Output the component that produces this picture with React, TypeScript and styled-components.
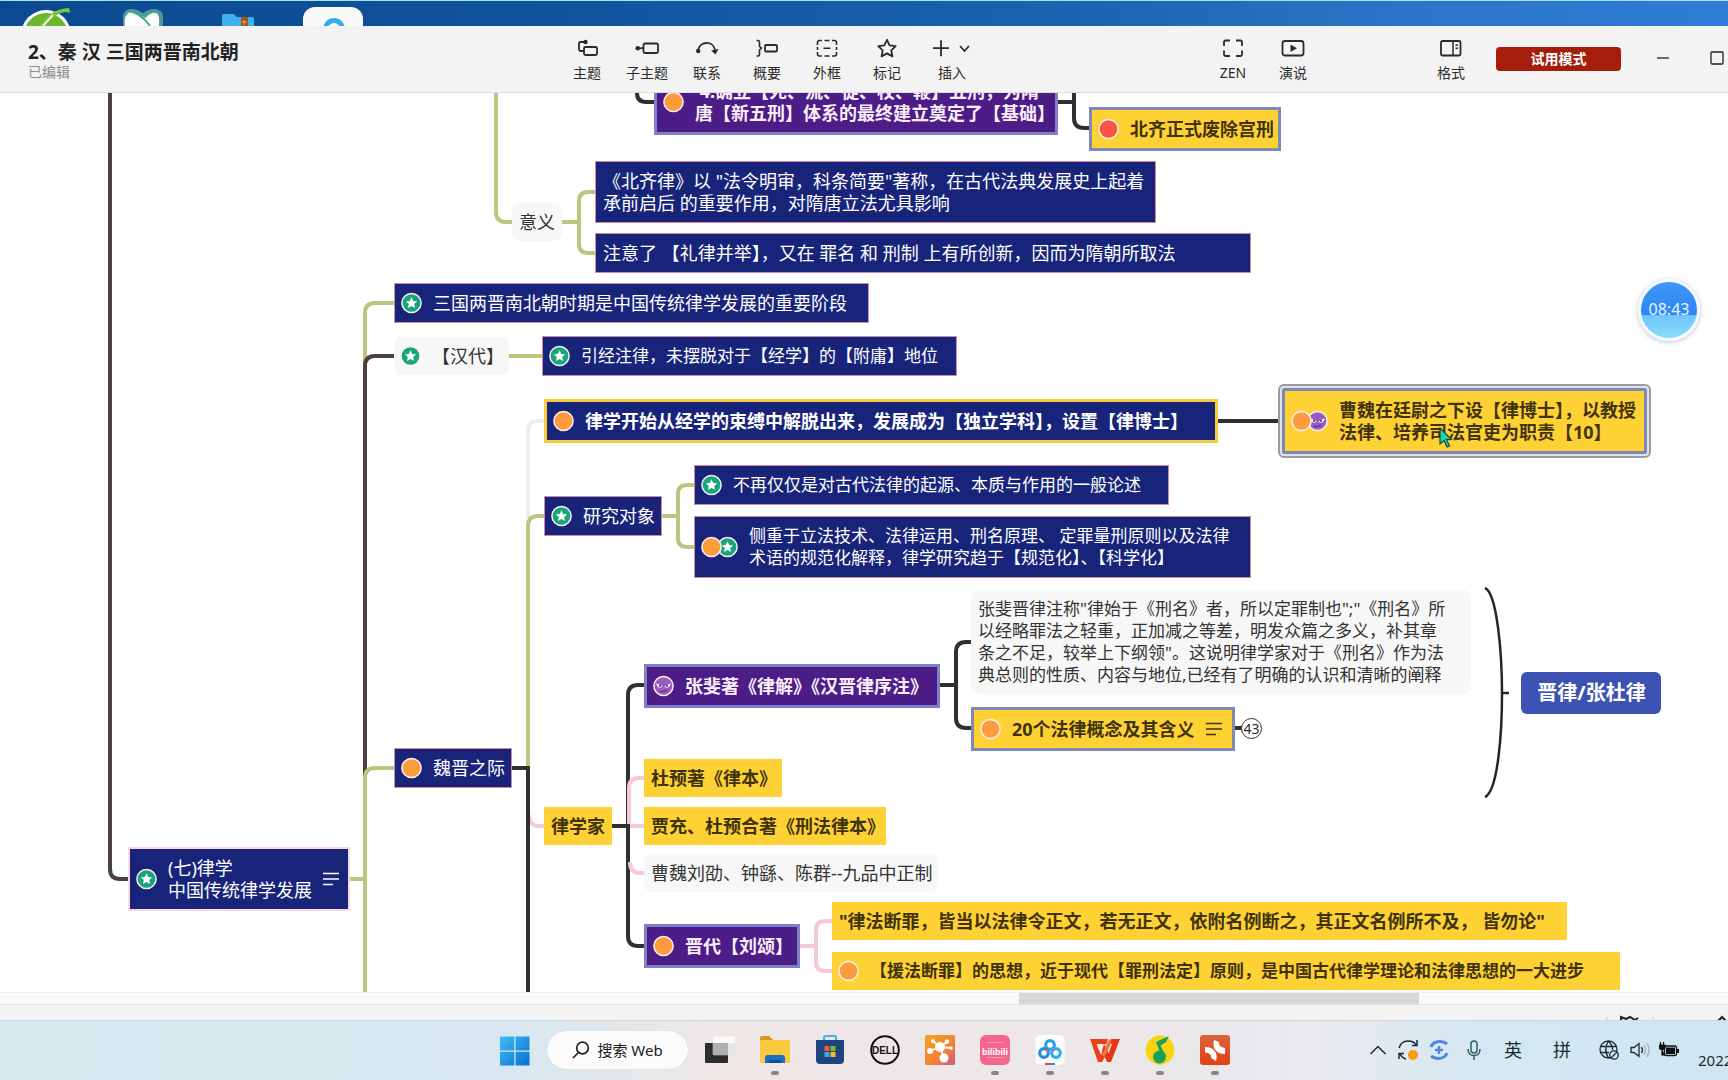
import React from "react";
import styled, { createGlobalStyle } from "styled-components";

const GlobalStyle = createGlobalStyle`
  * { box-sizing: border-box; }
  body {
    margin: 0;
    overflow: hidden;
    background: #fff;
    color: #2b2b2b;
    font-family: "Noto Sans", "Noto Sans CJK SC", sans-serif;
  }
  button {
    margin: 0;
    padding: 0;
    border: 0;
    background: none;
    color: inherit;
    font: inherit;
  }
  svg { display: block; }
`;

const Page = styled.div`
  display: flex;
  flex-direction: column;
  height: 100vh;
  overflow: hidden;
`;

/* ---------- desktop strip ---------- */

const Desktop = styled.div`
  flex: none;
  display: flex;
  height: 26px;
  overflow: hidden;
  border-top: 1px solid #a9e3ee;
  background: linear-gradient(90deg, #0b4a90 0%, #0f539c 30%, #1b63b0 62%, #2c76ca 82%, #2e7cd6 100%);
`;

const DesktopIcon = styled.div`
  flex: none;
  width: 95px;
  display: flex;
  justify-content: center;
`;

/* ---------- window header ---------- */

const Header = styled.header`
  flex: none;
  display: flex;
  height: 67px;
  background: #f3f3f3;
  border-bottom: 1px solid #dedede;
`;

const TitleBlock = styled.div`
  flex: 557 1 0;
  min-width: 0;
  white-space: nowrap;
`;

const Title = styled.h1`
  margin: 15px 0 0 28px;
  font-size: 19px;
  line-height: 22px;
  font-weight: 700;
  color: #222;
`;

const Status = styled.p`
  margin: 0 0 0 28px;
  font-size: 14px;
  line-height: 18px;
  color: #8b8b8b;
`;

const Tools = styled.div`
  flex: none;
  display: flex;
`;

const Spacer = styled.div<{ $grow: number }>`
  flex: ${(p) => p.$grow} 1 0;
`;

const Tool = styled.button<{ $wide?: boolean }>`
  width: ${(p) => (p.$wide ? 70 : 60)}px;
  height: 66px;
  padding-top: 12px;
  display: flex;
  flex-direction: column;
  align-items: center;
  gap: 5px;
  font-size: 14px;
  line-height: 20px;
  white-space: nowrap;
`;

const TrialButton = styled.button`
  flex: none;
  align-self: flex-start;
  width: 125px;
  height: 24px;
  margin: 21px 15px 0;
  border-radius: 4px;
  background: #a41e0b;
  color: #fff;
  font-size: 14px;
  line-height: 24px;
  font-weight: 700;
`;

const WindowControls = styled.div`
  flex: none;
  display: flex;
  width: 92px;
  height: 64px;
  overflow: hidden;
`;

const WindowButton = styled.button`
  flex: none;
  width: 54px;
  display: flex;
  align-items: center;
  justify-content: center;
`;

/* ---------- map canvas ---------- */

const Canvas = styled.main`
  flex: 1;
  position: relative;
  min-height: 0;
  overflow: hidden;
  background: #fff;
`;

const Links = styled.svg`
  position: absolute;
  inset: 0;
  width: 100%;
  height: 100%;
  overflow: visible;
`;

type Kind = "navy" | "root" | "navyGold" | "purple" | "gold" | "goldFramed" | "plain" | "summary";

const kinds: Record<Kind, string> = {
  navy: "background:#18247a;color:#fff;border:1px solid #cf8ba6;",
  root: "background:#18247a;color:#fff;border:2px solid #fadadf;",
  navyGold: "background:#18247a;color:#fff;border:3px solid #f6cb3c;font-weight:700;",
  purple: "background:#4c1d86;color:#fbeefb;border:3px solid #7f81c6;font-weight:700;",
  gold: "background:#fed235;color:#41320c;font-weight:700;",
  goldFramed: "background:#fed235;color:#41320c;border:3px solid #8089b4;font-weight:700;",
  plain: "background:#f7f7f7;color:#333;border-radius:8px;",
  summary: "background:#3d53b3;color:#fff;border-radius:6px;font-weight:700;",
};

const NodeBox = styled.div<{
  $x: number;
  $y: number;
  $w: number;
  $kind: Kind;
  $marked?: boolean;
  $dense?: boolean;
  $selected?: boolean;
}>`
  position: absolute;
  left: ${(p) => p.$x}px;
  top: ${(p) => p.$y}px;
  width: ${(p) => p.$w}px;
  display: flex;
  align-items: center;
  gap: 11px;
  padding: 8px 6px 8px ${(p) => (p.$marked ? 6 : 7)}px;
  font-size: ${(p) => (p.$kind === "summary" ? 20 : p.$dense ? 17 : 18)}px;
  line-height: ${(p) => (p.$kind === "summary" ? 26 : 22)}px;
  white-space: pre;
  ${(p) => kinds[p.$kind]}
  ${(p) => p.$kind === "summary" && "justify-content: center;"}
  ${(p) => p.$selected && "outline: 2px solid #9b9b9b; outline-offset: 2px; border-radius: 2px; box-shadow: 0 0 0 2px #dfe3f1;"}
`;

const Markers = styled.span`
  flex: none;
  display: flex;
  svg + svg { margin-left: -5px; }
  svg:first-child { position: relative; z-index: 1; }
`;

const NoteIcon = styled.svg`
  flex: none;
  margin-left: auto;
  margin-right: 5px;
`;

const FoldCount = styled.button`
  position: absolute;
  left: 1241px;
  top: 625px;
  width: 21px;
  height: 21px;
  border: 1px solid #333;
  border-radius: 50%;
  background: #fff;
  font-size: 14px;
  line-height: 19px;
  text-align: center;
`;

const Timer = styled.div`
  position: absolute;
  right: 28px;
  top: 186px;
  width: 62px;
  height: 62px;
  border: 3px solid #f4faff;
  border-radius: 50%;
  background: linear-gradient(180deg, #3f97f8 0%, #2f86f5 58%, #6fc6f9 60%, #8bdcfb 100%);
  box-shadow: 0 1px 5px rgba(60, 80, 120, 0.35);
  color: #e6f5ff;
  font-size: 16px;
  line-height: 55px;
  text-align: center;
`;

const Pointer = styled.svg`
  position: absolute;
  left: 1439px;
  top: 334px;
`;

/* ---------- scrollbar and status bar ---------- */

const ScrollTrack = styled.div`
  flex: none;
  display: flex;
  height: 13px;
  background: #fafafa;
  border-top: 1px solid #ececec;
  border-bottom: 1px solid #e2e2e2;
`;

const ScrollThumb = styled.div`
  width: 400px;
  background: #d7d7d7;
`;

const StatusBar = styled.div`
  flex: none;
  display: flex;
  justify-content: flex-end;
  height: 15px;
  overflow: hidden;
  background: #f4f3f3;
`;

/* ---------- taskbar ---------- */

const Taskbar = styled.footer`
  flex: none;
  display: grid;
  grid-template-columns: 1fr auto 1fr;
  height: 60px;
  border-top: 1px solid #d3d6da;
  background: linear-gradient(90deg, #d6e9ef 0%, #d9e8f0 30%, #efe7e6 42%, #ece7e9 64%, #e9e9ee 76%, #d4e8f1 86%, #cfe6f1 100%);
`;

const Apps = styled.nav`
  grid-column: 2;
  display: flex;
  padding: 10px 0 0 2px;
`;

const Search = styled.button`
  width: 141px;
  height: 38px;
  margin: 0 17px;
  display: flex;
  align-items: center;
  justify-content: center;
  gap: 7px;
  border-radius: 19px;
  background: #fbfbfc;
  box-shadow: 0 0 1px #b9bcc2;
  font-size: 15px;
  line-height: 20px;
  color: #1b1b1b;
`;

const AppList = styled.div`
  display: flex;
  gap: 25px;
`;

const AppButton = styled.button<{ $running?: boolean }>`
  width: 30px;
  height: 44px;
  padding-top: 4px;
  display: flex;
  flex-direction: column;
  align-items: center;
  justify-content: space-between;
  &::after {
    content: "";
    width: 8px;
    height: 4px;
    border-radius: 2px;
    background: ${(p) => (p.$running ? "#8a8586" : "transparent")};
  }
`;

const Tray = styled.div`
  display: flex;
  justify-content: flex-end;
  overflow: hidden;
`;

const TrayButton = styled.button<{ $w: number }>`
  flex: none;
  width: ${(p) => p.$w}px;
  height: 58px;
  display: flex;
  align-items: center;
  justify-content: center;
  font-size: 18px;
  line-height: 24px;
  color: #1c2a33;
`;

const DateText = styled.div`
  flex: none;
  width: 30px;
  margin-left: 14px;
  padding-top: 28px;
  overflow: hidden;
  font-size: 15px;
  line-height: 22px;
  color: #1c2a33;
`;

/* ---------- drawings ---------- */

type MarkerName = "star" | "orange" | "red" | "imp";

const Marker = ({ name }: { name: MarkerName }) => {
  const fill = { star: "#17a57b", orange: "#fd9c3d", red: "#fb5243", imp: "#9a5bc0" }[name];
  return (
    <svg width="21" height="22" viewBox="0 0 21 22" aria-hidden="true">
      <circle cx="10.500" cy="11" r="9.600" fill={fill} stroke="#fdeef0" strokeWidth="1.500" />
      {name === "star" && (
        <path d="M10.500 5.300L12.200 9L16.200 9.400L13.200 12.100L14 16L10.500 14L7 16L7.800 12.100L4.800 9.400L8.800 9z" fill="#fff" />
      )}
      {name === "imp" && (
        <g>
          <path d="M3.200 8.200L9.500 11.300C8.500 13.600 4 13.200 3.200 8.200zM17.800 8.200L11.500 11.300C12.500 13.600 17 13.200 17.800 8.200z" fill="#fff" />
          <circle cx="7" cy="11" r="1" fill="#4a2468" />
          <circle cx="14" cy="11" r="1" fill="#4a2468" />
          <path d="M7 16Q10.500 17.500 14 15" stroke="#5f2f86" strokeWidth="1.300" fill="none" />
        </g>
      )}
    </svg>
  );
};

interface MapNode {
  x: number;
  y: number;
  w: number;
  kind: Kind;
  text: string;
  markers?: MarkerName[];
  note?: boolean;
  dense?: boolean;
  selected?: boolean;
}

const nodes: MapNode[] = [
  { x: 654, y: -24, w: 404, kind: "purple", markers: ["orange"], text: " 4.确立【死、流、徒、杖、鞭】五刑，为隋\n唐【新五刑】体系的最终建立奠定了【基础】" },
  { x: 1089, y: 14, w: 192, kind: "goldFramed", markers: ["red"], text: "北齐正式废除宫刑" },
  { x: 512, y: 110, w: 50, kind: "plain", text: "意义" },
  { x: 595, y: 68, w: 561, kind: "navy", text: "《北齐律》以 \"法令明审，科条简要\"著称，在古代法典发展史上起着\n承前启后 的重要作用，对隋唐立法尤具影响" },
  { x: 595, y: 140, w: 656, kind: "navy", text: "注意了 【礼律并举】，又在 罪名 和 刑制 上有所创新，因而为隋朝所取法" },
  { x: 394, y: 190, w: 475, kind: "navy", markers: ["star"], text: "三国两晋南北朝时期是中国传统律学发展的重要阶段" },
  { x: 394, y: 244, w: 115, kind: "plain", markers: ["star"], text: "【汉代】" },
  { x: 542, y: 243, w: 415, kind: "navy", dense: true, markers: ["star"], text: "引经注律，未摆脱对于【经学】的【附庸】地位" },
  { x: 544, y: 306, w: 674, kind: "navyGold", markers: ["orange"], text: "律学开始从经学的束缚中解脱出来，发展成为【独立学科】，设置【律博士】" },
  { x: 1282, y: 295, w: 365, kind: "goldFramed", selected: true, markers: ["orange", "imp"], text: "曹魏在廷尉之下设【律博士】，以教授\n法律、培养司法官吏为职责【10】" },
  { x: 544, y: 403, w: 118, kind: "navy", markers: ["star"], text: "研究对象" },
  { x: 694, y: 372, w: 475, kind: "navy", dense: true, markers: ["star"], text: "不再仅仅是对古代法律的起源、本质与作用的一般论述" },
  { x: 694, y: 423, w: 557, kind: "navy", dense: true, markers: ["orange", "star"], text: "侧重于立法技术、法律运用、刑名原理、 定罪量刑原则以及法律\n术语的规范化解释，律学研究趋于【规范化】、【科学化】" },
  { x: 971, y: 497, w: 500, kind: "plain", dense: true, text: "张斐晋律注称\"律始于《刑名》者，所以定罪制也\";\"《刑名》所\n以经略罪法之轻重，正加减之等差，明发众篇之多义，补其章\n条之不足，较举上下纲领\"。这说明律学家对于《刑名》作为法\n典总则的性质、内容与地位,已经有了明确的认识和清晰的阐释" },
  { x: 644, y: 571, w: 296, kind: "purple", markers: ["imp"], text: "张斐著《律解》《汉晋律序注》" },
  { x: 971, y: 614, w: 264, kind: "goldFramed", markers: ["orange"], note: true, text: "20个法律概念及其含义" },
  { x: 394, y: 655, w: 118, kind: "navy", markers: ["orange"], text: "魏晋之际" },
  { x: 544, y: 714, w: 68, kind: "gold", text: "律学家" },
  { x: 644, y: 666, w: 138, kind: "gold", text: "杜预著《律本》" },
  { x: 644, y: 714, w: 242, kind: "gold", text: "贾充、杜预合著《刑法律本》" },
  { x: 644, y: 761, w: 294, kind: "plain", text: "曹魏刘劭、钟繇、陈群--九品中正制" },
  { x: 644, y: 831, w: 156, kind: "purple", markers: ["orange"], text: "晋代【刘颂】" },
  { x: 832, y: 809, w: 735, kind: "gold", text: "\"律法断罪，皆当以法律令正文，若无正文，依附名例断之，其正文名例所不及， 皆勿论\"" },
  { x: 832, y: 859, w: 788, kind: "gold", dense: true, markers: ["orange"], text: "【援法断罪】的思想，近于现代【罪刑法定】原则，是中国古代律学理论和法律思想的一大进步" },
  { x: 128, y: 754, w: 222, kind: "root", markers: ["star"], note: true, text: "(七)律学\n中国传统律学发展" },
  { x: 1521, y: 579, w: 140, kind: "summary", text: "晋律/张杜律" },
];

const BROWN = "#4a403f";
const OLIVE = "#bfc47f";
const DARK = "#303030";
const PINK = "#f7c7dc";

const links: [string, string][] = [
  [BROWN, "M110 0V776Q110 786 120 786H128"],
  [OLIVE, "M496 0V119Q496 129 506 129H512"],
  [OLIVE, "M562 129H579M595 99H588Q579 99 579 108V151Q579 160 588 160H595"],
  [DARK, "M637 -5V0Q637 9 646 9H654"],
  [DARK, "M1058 9H1074M1074 -10V25Q1074 35 1084 35H1089"],
  [OLIVE, "M394 210H375Q365 210 365 220V270"],
  [BROWN, "M394 263H375Q365 263 365 273V690"],
  [OLIVE, "M509 263H542"],
  ["#eeeeee", "M544 328H538Q528 328 528 338V425"],
  [DARK, "M1218 328H1280"],
  [OLIVE, "M544 423H538Q528 423 528 433V675"],
  [OLIVE, "M662 423H678M694 392H687Q678 392 678 401V445Q678 454 687 454H694"],
  [OLIVE, "M394 675H375Q365 675 365 685V910M350 786H365"],
  [PINK, "M529 722Q529 733 539 733H544"],
  [DARK, "M512 675H528V910"],
  [DARK, "M612 733H628M644 592H638Q628 592 628 602V843Q628 853 638 853H644"],
  [PINK, "M644 685H639Q629 685 629 695V731M630 733H644M630 769Q630 780 640 780H644"],
  [DARK, "M940 592H956M971 549H966Q956 549 956 559V625Q956 635 966 635H971"],
  [DARK, "M1235 635H1242"],
  [PINK, "M800 853H816M832 828H825Q816 828 816 837V869Q816 878 825 878H832"],
];

const ToolIcon = ({ children, width = 24 }: { children: React.ReactNode; width?: number }) => (
  <svg width={width} height="20" viewBox={`0 0 ${width} 20`} fill="none" stroke="#2b2b2b" strokeWidth="1.800" strokeLinejoin="round" aria-hidden="true">
    {children}
  </svg>
);

const tools: { label: string; wide?: boolean; icon: React.ReactNode }[] = [
  {
    label: "主题",
    icon: (
      <ToolIcon>
        <rect x="9" y="9" width="13" height="8" rx="1.500" />
        <path d="M9 13H6Q4 13 4 11V5.500Q4 4 5.500 4H10" />
        <circle cx="10.500" cy="4" r="2.200" fill="#2b2b2b" stroke="none" />
      </ToolIcon>
    ),
  },
  {
    label: "子主题",
    icon: (
      <ToolIcon>
        <rect x="8.500" y="5.500" width="14.500" height="9.500" rx="1.500" />
        <path d="M2 10.200H8" />
        <circle cx="2.800" cy="10.200" r="2.300" fill="#2b2b2b" stroke="none" />
      </ToolIcon>
    ),
  },
  {
    label: "联系",
    icon: (
      <ToolIcon>
        <path d="M3 13C4 3 18 2 20 12" />
        <circle cx="3.200" cy="13" r="2.200" fill="#2b2b2b" stroke="none" />
        <path d="M16 12.500L23.500 11L20.500 16.500z" fill="#2b2b2b" stroke="none" />
      </ToolIcon>
    ),
  },
  {
    label: "概要",
    icon: (
      <ToolIcon>
        <path d="M1.500 2.500H3Q4.500 2.500 4.500 4V8.500L6.500 10.200L4.500 12V16.500Q4.500 18 3 18H1.500" strokeWidth="1.600" />
        <rect x="10" y="7" width="12" height="6.500" rx="1" />
      </ToolIcon>
    ),
  },
  {
    label: "外框",
    icon: (
      <ToolIcon>
        <path d="M7 2.500H4.500Q2.500 2.500 2.500 4.500V7M2.500 9V12M2.500 14V16Q2.500 18 4.500 18H7M9.500 18H14.500M17 18H19.500Q21.500 18 21.500 16V14M21.500 12V9M21.500 7V4.500Q21.500 2.500 19.500 2.500H17M14.500 2.500H9.500M8.500 10.200H15.500" strokeWidth="1.600" />
      </ToolIcon>
    ),
  },
  {
    label: "标记",
    icon: (
      <ToolIcon>
        <path d="M12 1.800L14.600 7.300L20.700 8.100L16.300 12.300L17.400 18.400L12 15.400L6.600 18.400L7.700 12.300L3.300 8.100L9.400 7.300z" />
      </ToolIcon>
    ),
  },
  {
    label: "插入",
    wide: true,
    icon: (
      <ToolIcon width={40}>
        <path d="M1 10.200H17M9 2.200V18.200M28 8L32.500 13L37 8" />
      </ToolIcon>
    ),
  },
];

const apps: { name: string; running?: boolean; icon: React.ReactNode }[] = [
  {
    name: "任务视图",
    icon: (
      <>
        <rect x="0" y="8" width="23" height="20" rx="1" fill="#2d2d2f" />
        <rect x="8" y="1" width="22" height="19" rx="1" fill="#fafafa" stroke="#dedcdd" strokeWidth="0.500" />
        <rect x="8" y="8" width="15" height="12" fill="#b0b0b2" />
        <rect x="23" y="8" width="7" height="12" fill="#e6e5e6" />
      </>
    ),
  },
  {
    name: "文件资源管理器",
    running: true,
    icon: (
      <>
        <path d="M0 3Q0 1 2 1H9L13 5V12H0z" fill="#d59a1c" />
        <rect x="0" y="5" width="30" height="23" rx="1.500" fill="#fbc93f" />
        <path d="M5 28V23Q5 20 8 20H22Q25 20 25 23V28z" fill="#1c6fc0" />
        <rect x="9" y="25" width="12" height="3" fill="#114f96" />
      </>
    ),
  },
  {
    name: "应用商店",
    icon: (
      <>
        <path d="M9 6V2.500Q9 1 10.500 1H19.500Q21 1 21 2.500V6" stroke="#3cb4ec" strokeWidth="2" fill="none" />
        <path d="M1 5H29V25Q29 29 25 29H5Q1 29 1 25z" fill="#1b4480" />
        <rect x="9.500" y="11" width="5" height="5" fill="#f05a28" />
        <rect x="15.500" y="11" width="5" height="5" fill="#7fba22" />
        <rect x="9.500" y="17" width="5" height="5" fill="#35a9ea" />
        <rect x="15.500" y="17" width="5" height="5" fill="#fdbc22" />
      </>
    ),
  },
  {
    name: "戴尔",
    icon: (
      <>
        <circle cx="15" cy="15" r="13.800" fill="none" stroke="#111" strokeWidth="2" />
        <text x="15" y="18.500" textAnchor="middle" fontFamily="Liberation Sans, sans-serif" fontWeight="700" fontSize="10" fill="#111">DELL</text>
      </>
    ),
  },
  {
    name: "思维",
    icon: (
      <>
        <defs>
          <linearGradient id="mind" x1="0" y1="0" x2="1" y2="1">
            <stop offset="0" stopColor="#f4a41c" />
            <stop offset="0.600" stopColor="#f5803a" />
            <stop offset="1" stopColor="#c65a86" />
          </linearGradient>
        </defs>
        <rect width="30" height="30" rx="1.500" fill="url(#mind)" />
        <path d="M15 12L8 6M15 12L22 7M15 12L26 13M15 12L5 16M15 12L19 23" stroke="#fff" strokeWidth="1.800" />
        <circle cx="15" cy="12" r="5" fill="#fff" />
        <circle cx="8" cy="6" r="2" fill="#fff" />
        <circle cx="22" cy="6.500" r="2.200" fill="#fff" />
        <circle cx="26" cy="13" r="1.800" fill="#fff" />
        <circle cx="5" cy="16" r="3" fill="#fff" />
        <circle cx="19" cy="23" r="4.500" fill="#fff" />
      </>
    ),
  },
  {
    name: "哔哩哔哩",
    running: true,
    icon: (
      <>
        <rect width="30" height="30" rx="6" fill="#f5668f" />
        <path d="M6 7.500H24M6 22.500H24" stroke="#f994b2" strokeWidth="1" />
        <text x="15" y="19.500" textAnchor="middle" fontFamily="Liberation Sans, sans-serif" fontWeight="700" fontSize="9" fill="#fff">bilibili</text>
      </>
    ),
  },
  {
    name: "百度网盘",
    running: true,
    icon: (
      <>
        <rect x="0.500" width="29" height="30" rx="5" fill="#fdfdfd" />
        <g fill="none" strokeWidth="3.200">
          <circle cx="15" cy="10" r="4.300" stroke="#2b9fe8" />
          <circle cx="9" cy="18" r="4.300" stroke="#1f8fe0" />
          <circle cx="21" cy="18" r="4.300" stroke="#25b4ea" />
          <path d="M12.300 14.800L11 16M17.800 14.800L19 16" stroke="#e8657f" />
        </g>
        <path d="M10 29H15" stroke="#e33f5a" strokeWidth="2" />
        <path d="M15 29H20" stroke="#2a8bdc" strokeWidth="2" />
      </>
    ),
  },
  {
    name: "WPS",
    running: true,
    icon: (
      <>
        <path d="M0 4H18L16.500 9H6.500L11 20L15 11L17.500 17L12 27H8z" fill="#e8401d" />
        <path d="M14 9L18.500 18.500L22 9H19L21 4H30L21 27H17L12 16z" fill="#e63514" />
        <path d="M19 4L12 20L14.500 22L21.500 8z" fill="#f5733c" />
      </>
    ),
  },
  {
    name: "QQ音乐",
    running: true,
    icon: (
      <>
        <circle cx="15" cy="15" r="14.500" fill="#fad214" />
        <path d="M11 7L24 1L21 7L15.500 10.500L20 20H16z" fill="#19a05c" />
        <circle cx="14.500" cy="22" r="6.500" fill="#19a05c" />
      </>
    ),
  },
  {
    name: "XMind",
    running: true,
    icon: (
      <>
        <defs>
          <linearGradient id="xm" x1="0" y1="0" x2="0" y2="1">
            <stop offset="0" stopColor="#d9663a" />
            <stop offset="1" stopColor="#e23f16" />
          </linearGradient>
        </defs>
        <rect width="30" height="30" rx="3" fill="url(#xm)" />
        <path d="M14 5L19 7Q18 12 25 13V19Q18 19 15 14.500Q12.500 11 14 5zM5 12Q12 12 14.500 16Q18 19 16 26L11 23Q12 18 5 17.500z" fill="#fff" />
      </>
    ),
  },
];

export default function App() {
  return (
    <Page>
      <GlobalStyle />

      <Desktop>
        <DesktopIcon>
          <svg width="52" height="25" viewBox="0 0 52 25">
            <circle cx="24" cy="34" r="25" fill="#fff" />
            <circle cx="24" cy="34" r="22" fill="#6db52c" />
            <path d="M18 25Q28 8 47 7Q48 9 48 12Q42 9 35 14Q26 18 20 25z" fill="#7cc63a" />
            <path d="M21 25L31 14" stroke="#e9f6d8" strokeWidth="2" />
          </svg>
        </DesktopIcon>
        <DesktopIcon>
          <svg width="40" height="25" viewBox="0 0 40 25">
            <path d="M0 25V14Q2 7 10 8Q16 9 20 12Q25 8 32 8Q40 9 40 16V25z" fill="#57939f" />
            <path d="M2 25Q0 12 9 11Q18 14 22 17Q28 11 33 12Q37 13 36 25z" fill="#fff" />
            <path d="M5 10Q18 12 27 25M22 16Q28 9 36 11" stroke="#3fa98c" strokeWidth="2" fill="none" />
          </svg>
        </DesktopIcon>
        <DesktopIcon>
          <svg width="32" height="25" viewBox="0 0 32 25">
            <path d="M0 25V15Q0 13 2 13H12L15 16H30Q32 16 32 18V25z" fill="#3fb0f0" />
            <rect x="19" y="16" width="7" height="9" fill="#a3521d" />
            <path d="M22 19V24M20 21H25" stroke="#f4a32b" strokeWidth="1" />
          </svg>
        </DesktopIcon>
        <DesktopIcon>
          <svg width="60" height="25" viewBox="0 0 60 25">
            <rect y="6" width="60" height="40" rx="12" fill="#fafafa" />
            <circle cx="31" cy="28" r="8.500" fill="none" stroke="#35aee8" strokeWidth="5" />
          </svg>
        </DesktopIcon>
      </Desktop>

      <Header>
        <TitleBlock>
          <Title>2、秦 汉 三国两晋南北朝</Title>
          <Status>已编辑</Status>
        </TitleBlock>
        <Tools>
          {tools.map((t) => (
            <Tool key={t.label} type="button" $wide={t.wide}>
              {t.icon}
              {t.label}
            </Tool>
          ))}
        </Tools>
        <Spacer $grow={216} />
        <Tools>
          <Tool type="button">
            <ToolIcon>
              <path d="M9 2.500H4.500Q3 2.500 3 4V8M3 12.500V16.500Q3 18 4.500 18H9M15 18H19.500Q21 18 21 16.500V12.500M21 8V4Q21 2.500 19.500 2.500H15" />
            </ToolIcon>
            ZEN
          </Tool>
          <Tool type="button">
            <ToolIcon>
              <rect x="1.500" y="3" width="21" height="14.500" rx="2.500" />
              <path d="M9.500 6.500L16 10.200L9.500 14z" fill="#2b2b2b" stroke="none" />
            </ToolIcon>
            演说
          </Tool>
        </Tools>
        <Spacer $grow={98} />
        <Tools>
          <Tool type="button">
            <ToolIcon>
              <rect x="2" y="3" width="19.500" height="14.500" rx="1.500" />
              <path d="M14 3V17.500M16.500 7H19M16.500 10.200H19" strokeWidth="1.500" />
            </ToolIcon>
            格式
          </Tool>
        </Tools>
        <TrialButton type="button">试用模式</TrialButton>
        <WindowControls>
          <WindowButton type="button" aria-label="最小化">
            <svg width="14" height="14" viewBox="0 0 14 14">
              <path d="M1 7H13" stroke="#222" strokeWidth="1.300" />
            </svg>
          </WindowButton>
          <WindowButton type="button" aria-label="最大化">
            <svg width="14" height="14" viewBox="0 0 14 14">
              <rect x="1" y="1" width="12" height="12" rx="1" fill="none" stroke="#222" strokeWidth="1.300" />
            </svg>
          </WindowButton>
        </WindowControls>
      </Header>

      <Canvas>
        <Links fill="none" strokeWidth="4" aria-hidden="true">
          {links.map(([color, d]) => (
            <path key={d} d={d} stroke={color} />
          ))}
          <path d="M1485 495C1497 500 1502 560 1502 600C1502 640 1498 698 1485 704M1502 600H1509" stroke="#262626" strokeWidth="2.500" />
        </Links>
        {nodes.map((n) => (
          <NodeBox
            key={n.text}
            $x={n.x}
            $y={n.y}
            $w={n.w}
            $kind={n.kind}
            $marked={Boolean(n.markers)}
            $dense={n.dense}
            $selected={n.selected}
          >
            {n.markers && (
              <Markers>
                {n.markers.map((m) => (
                  <Marker key={m} name={m} />
                ))}
              </Markers>
            )}
            <span>{n.text}</span>
            {n.note && (
              <NoteIcon width="16" height="14" viewBox="0 0 16 14" stroke="currentColor" strokeWidth="1.500">
                <path d="M0 1.500H16M0 7H16M0 12.500H10" />
              </NoteIcon>
            )}
          </NodeBox>
        ))}
        <FoldCount type="button">43</FoldCount>
        <Timer>08:43</Timer>
        <Pointer width="14" height="22" viewBox="0 0 14 22">
          <path d="M1 1V17L5 13.500L8 20L10.500 19L7.500 12.500H12.500z" fill="#22d6a8" stroke="#17473f" strokeWidth="1.200" />
        </Pointer>
      </Canvas>

      <ScrollTrack>
        <Spacer $grow={1019} />
        <ScrollThumb />
        <Spacer $grow={309} />
      </ScrollTrack>
      <StatusBar>
        <svg width="130" height="15" viewBox="0 0 130 15" aria-hidden="true">
          <path d="M9 12V15M55 12V15" stroke="#c9c9c9" />
          <path d="M23 15V12L28 14L32 12L37 15L40 13" stroke="#222" strokeWidth="2" fill="none" />
          <path d="M120 16L124 12L128 16" stroke="#222" strokeWidth="2" fill="none" />
        </svg>
      </StatusBar>

      <Taskbar>
        <Apps>
          <AppButton type="button" aria-label="开始">
            <svg width="30" height="32" viewBox="0 0 30 32">
              <defs>
                <linearGradient id="win" x1="0" y1="0" x2="1" y2="1">
                  <stop offset="0" stopColor="#42bdf5" />
                  <stop offset="1" stopColor="#0a6fd0" />
                </linearGradient>
              </defs>
              <path d="M0 1.500H14.300V15.500H0zM15.500 1.500H29.500V15.500H15.500zM0 16.700H14.300V30.500H0zM15.500 16.700H29.500V30.500H15.500z" fill="url(#win)" />
            </svg>
          </AppButton>
          <Search type="button">
            <svg width="18" height="18" viewBox="0 0 18 18" fill="none" stroke="#222" strokeWidth="1.700">
              <circle cx="10.500" cy="7" r="5.800" />
              <path d="M6.500 11.500L1 17" />
            </svg>
            搜索 Web
          </Search>
          <AppList>
            {apps.map((a) => (
              <AppButton key={a.name} type="button" aria-label={a.name} $running={a.running}>
                <svg width="30" height="30" viewBox="0 0 30 30">{a.icon}</svg>
              </AppButton>
            ))}
          </AppList>
        </Apps>
        <Tray>
          <TrayButton type="button" $w={28} aria-label="显示隐藏的图标">
            <svg width="18" height="12" viewBox="0 0 18 12" fill="none" stroke="#1c2a33" strokeWidth="1.500">
              <path d="M1.500 10L9 2.500L16.500 10" />
            </svg>
          </TrayButton>
          <TrayButton type="button" $w={31} aria-label="更新">
            <svg width="22" height="22" viewBox="0 0 22 22" fill="none" stroke="#1c2a33" strokeWidth="1.500">
              <path d="M2 9Q4 2 11 2Q17 2 19 6M20 1V6.500H15M9 20Q5 19 3 15M2 20V14.500H7" />
              <circle cx="16" cy="16" r="5" fill="#fb9a12" stroke="none" />
            </svg>
          </TrayButton>
          <TrayButton type="button" $w={31} aria-label="安全管家">
            <svg width="20" height="20" viewBox="0 0 20 20" fill="none" stroke="#4d86dc">
              <path d="M2 7Q4 1.500 11 1.500Q15 1.500 18 4" strokeWidth="3" />
              <path d="M18 13Q16 18.500 9 18.500Q5 18.500 2 16" strokeWidth="3" />
              <path d="M10 6V14M6 10H14" strokeWidth="2.500" />
            </svg>
          </TrayButton>
          <TrayButton type="button" $w={40} aria-label="麦克风">
            <svg width="14" height="20" viewBox="0 0 14 20" fill="none" stroke="#2f6069" strokeWidth="1.500">
              <rect x="4" y="1" width="6" height="12" rx="3" />
              <path d="M1 9Q1 15.500 7 15.500Q13 15.500 13 9M7 15.500V20" />
            </svg>
          </TrayButton>
          <TrayButton type="button" $w={38}>英</TrayButton>
          <TrayButton type="button" $w={60}>拼</TrayButton>
          <TrayButton type="button" $w={34} aria-label="网络">
            <svg width="20" height="20" viewBox="0 0 20 20" fill="none" stroke="#1c2a33" strokeWidth="1.300">
              <circle cx="9.500" cy="9.500" r="8.500" />
              <path d="M9.500 1Q4 9.500 9.500 18M9.500 1Q14 6 13.500 10M2 6.500H17M2 12.500H10" />
              <circle cx="15" cy="15" r="4.200" fill="#d3e8f1" />
              <path d="M12 18L18 12" />
            </svg>
          </TrayButton>
          <TrayButton type="button" $w={28} aria-label="音量">
            <svg width="20" height="16" viewBox="0 0 20 16" fill="none" stroke="#1c2a33" strokeWidth="1.300">
              <path d="M1 5.500H4L9 1.500V14.500L4 10.500H1z" />
              <path d="M11.500 5Q13.500 8 11.500 11" />
              <path d="M14 3Q17 8 14 13M17 1Q21 8 17 15" stroke="#9fb0b8" />
            </svg>
          </TrayButton>
          <TrayButton type="button" $w={30} aria-label="电池">
            <svg width="20" height="16" viewBox="0 0 20 16">
              <rect x="5.500" y="4" width="12" height="9.500" rx="2" fill="none" stroke="#111" strokeWidth="1.300" />
              <rect x="7" y="5.500" width="9" height="6.500" fill="#111" />
              <rect x="18" y="7" width="2" height="4" fill="#111" />
              <path d="M1.500 0V3M4.500 0V3M0 3H6V5Q6 7.500 3 7.500Q0 7.500 0 5zM3 7V13H6" fill="#111" stroke="#111" strokeWidth="1.200" />
            </svg>
          </TrayButton>
          <DateText>2022</DateText>
        </Tray>
      </Taskbar>
    </Page>
  );
}
